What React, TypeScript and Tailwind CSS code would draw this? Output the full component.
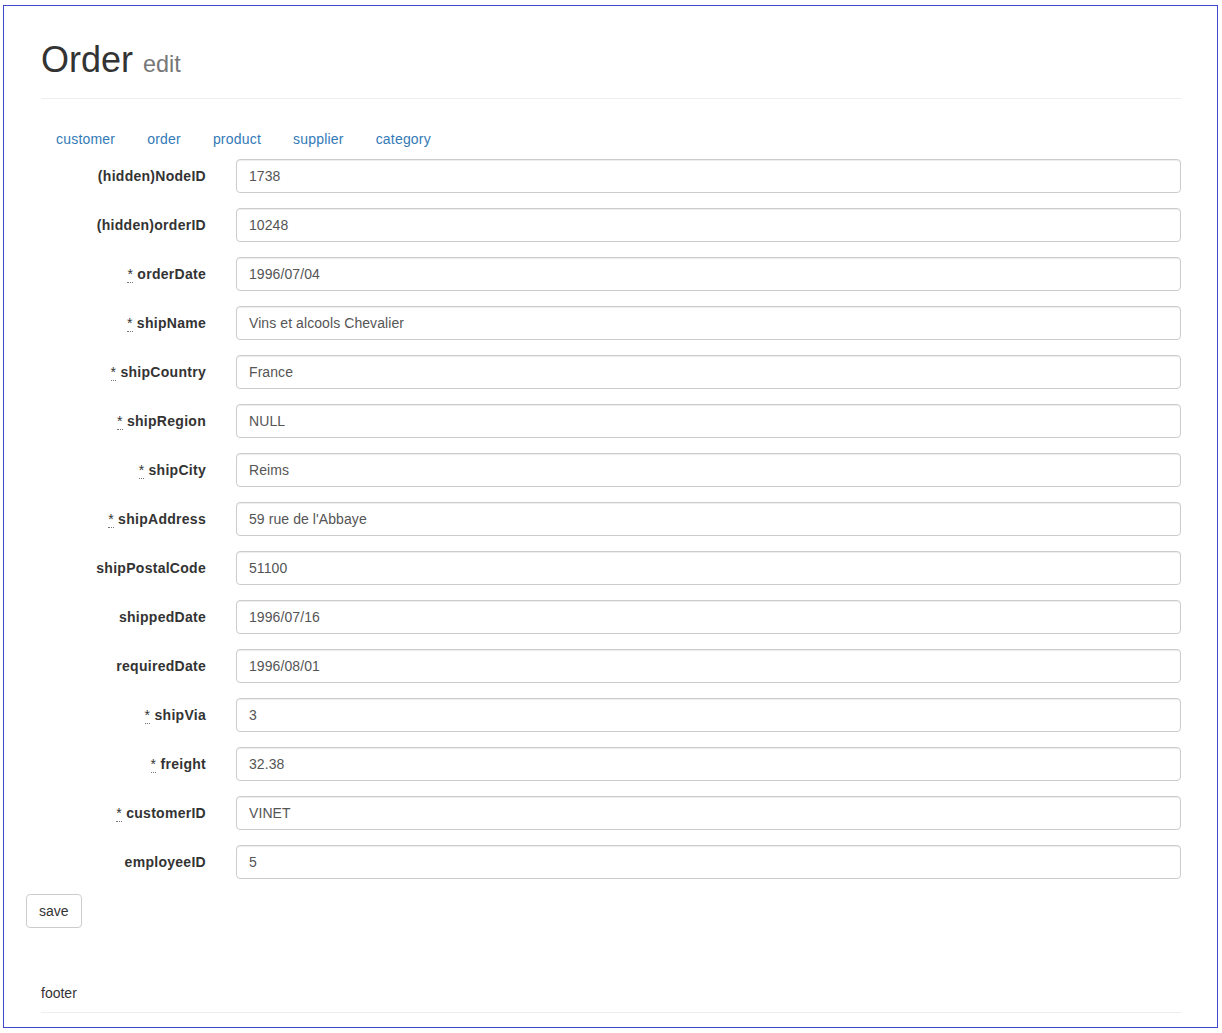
import React from 'react'

type Field = {
  label: string
  value: string
  required?: boolean
}

const FIELDS: Field[] = [
  { label: '(hidden)NodeID', value: '1738' },
  { label: '(hidden)orderID', value: '10248' },
  { label: 'orderDate', value: '1996/07/04', required: true },
  { label: 'shipName', value: 'Vins et alcools Chevalier', required: true },
  { label: 'shipCountry', value: 'France', required: true },
  { label: 'shipRegion', value: 'NULL', required: true },
  { label: 'shipCity', value: 'Reims', required: true },
  { label: 'shipAddress', value: "59 rue de l'Abbaye", required: true },
  { label: 'shipPostalCode', value: '51100' },
  { label: 'shippedDate', value: '1996/07/16' },
  { label: 'requiredDate', value: '1996/08/01' },
  { label: 'shipVia', value: '3', required: true },
  { label: 'freight', value: '32.38', required: true },
  { label: 'customerID', value: 'VINET', required: true },
  { label: 'employeeID', value: '5' },
]

const TABS = ['customer', 'order', 'product', 'supplier', 'category']

function FormRow({ field }: { field: Field }) {
  return (
    <div className="mb-[15px] flex gap-[30px]">
      <label className="w-[165px] shrink-0 pt-[7px] text-right text-[14px] font-bold leading-[20px] tracking-[0.28px] text-[#333]">
        {field.required ? (
          <>
            <abbr
              title="required"
              className="cursor-help border-b border-dotted border-[#777] font-normal no-underline"
            >
              *
            </abbr>{' '}
          </>
        ) : null}
        {field.label}
      </label>
      <input
        readOnly
        value={field.value}
        className="h-[34px] flex-1 rounded-[4px] border border-[#ccc] px-[12px] py-[6px] text-[14px] leading-[20px] tracking-[0.08px] text-[#555] shadow-[inset_0_1px_1px_rgba(0,0,0,0.075)] outline-none"
      />
    </div>
  )
}

export default function App() {
  return (
    <div className="min-h-screen bg-white font-['Liberation_Sans',Arial,sans-serif] text-[14px] text-[#333]">
      <div className="ml-[3px] mt-[5px] h-[1023px] w-[1215px] border border-[#3f48cc]">
        <div className="ml-[37px] w-[1140px]">
          <header className="border-b border-[#eee] pb-[18px] pt-[34px]">
            <h1 className="text-[36px] font-normal leading-[40px] text-[#333]">
              Order <small className="text-[23.4px] leading-none text-[#777]">edit</small>
            </h1>
          </header>

          <ul className="mt-[20px] flex gap-[2px]">
            {TABS.map((tab) => (
              <li key={tab}>
                <a href="#" className="block px-[15px] py-[10px] leading-[20px] tracking-[0.2px] text-[#337ab7]">
                  {tab}
                </a>
              </li>
            ))}
          </ul>

          <form>
            {FIELDS.map((field) => (
              <FormRow key={field.label} field={field} />
            ))}
            <button
              type="button"
              className="-ml-[15px] h-[34px] rounded-[4px] border border-[#ccc] bg-white px-[12px] py-[6px] text-[14px] leading-[20px] text-[#333]"
            >
              save
            </button>
          </form>

          <footer className="mt-[55px] border-b border-[#eee] pb-[9px] leading-[20px]">footer</footer>
        </div>
      </div>
    </div>
  )
}
